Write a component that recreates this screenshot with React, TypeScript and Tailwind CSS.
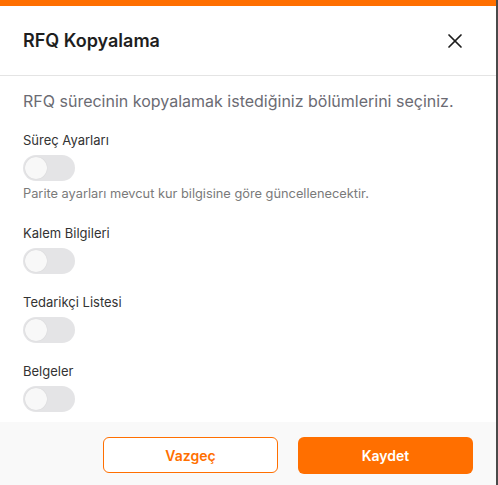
import React, { useState } from "react";
import { X } from "lucide-react";

const sections = [
  { key: "surec", label: "Süreç Ayarları", hint: "Parite ayarları mevcut kur bilgisine göre güncellenecektir." },
  { key: "kalem", label: "Kalem Bilgileri" },
  { key: "tedarikci", label: "Tedarikçi Listesi" },
  { key: "belgeler", label: "Belgeler" },
];

function Toggle({ on, onChange }: { on: boolean; onChange: () => void }) {
  return (
    <button
      type="button"
      onClick={onChange}
      className={`flex h-[26px] w-[52px] items-center rounded-full p-[2px] transition-colors ${
        on ? "bg-[#ff6f00] justify-end" : "bg-[#e4e4e6] justify-start"
      }`}
    >
      <span className="block h-[22px] w-[22px] rounded-full bg-[#f8f8f8] shadow-[0_0_1px_rgba(0,0,0,0.15)]" />
    </button>
  );
}

export default function App() {
  const [values, setValues] = useState<Record<string, boolean>>({});

  return (
    <div className="flex h-[485px] w-[498px] bg-[#4a4a4a] font-['Inter',sans-serif]">
      <div className="flex h-full w-[496px] flex-col bg-white">
        <div className="h-[6px] bg-[#ff6f00]" />

        <div className="flex h-[70px] items-center justify-between border-b border-[#e4e4e4] pl-[23px] pr-[29px]">
          <h2 className="text-[18px] font-semibold text-[#1e1e1e]">RFQ Kopyalama</h2>
          <button type="button" className="text-[#1e1e1e]">
            <X size={24} strokeWidth={1.7} />
          </button>
        </div>

        <div className="flex flex-1 flex-col px-[23px] pt-[13px]">
          <p className="text-[16px] leading-6 text-[#6b6b73]">
            RFQ sürecinin kopyalamak istediğiniz bölümlerini seçiniz.
          </p>

          <div className="mt-[17px] flex flex-col gap-[18px]">
            {sections.map((s) => (
              <div key={s.key} className="flex flex-col">
                <label className="text-[13px] leading-5 text-[#333]">{s.label}</label>
                <div className="mt-[5px]">
                  <Toggle
                    on={!!values[s.key]}
                    onChange={() => setValues((v) => ({ ...v, [s.key]: !v[s.key] }))}
                  />
                </div>
                {s.hint && (
                  <p className="mt-[5px] mb-[3px] text-[12.8px] leading-4 text-[#7a7a7a]">{s.hint}</p>
                )}
              </div>
            ))}
          </div>
        </div>

        <div className="flex h-[63px] items-start justify-end gap-[20px] bg-[#f9f9f9] pr-[23px] pt-[15px]">
          <button
            type="button"
            className="h-[36px] w-[175px] rounded-md border border-[#ff6f00] bg-white text-[14px] font-semibold text-[#ff6f00]"
          >
            Vazgeç
          </button>
          <button
            type="button"
            className="h-[37px] w-[175px] rounded-md bg-[#ff6f00] text-[14px] font-semibold text-white"
          >
            Kaydet
          </button>
        </div>
      </div>
    </div>
  );
}
